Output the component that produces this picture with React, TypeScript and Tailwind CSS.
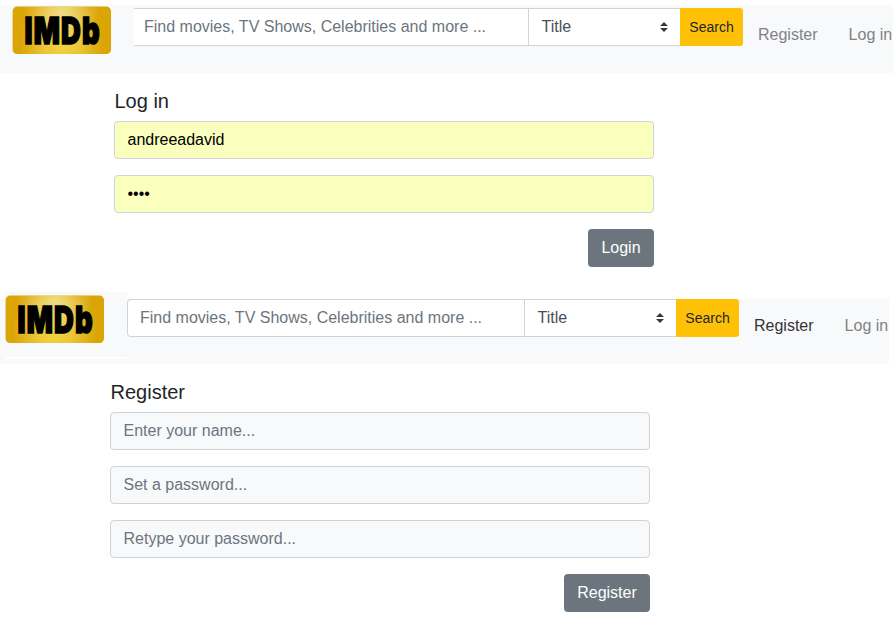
import React from "react";

function Logo({ id }: { id: string }) {
  return (
    <svg width="100" height="50" viewBox="0 0 100 50" className="block shrink-0 overflow-visible" role="img" aria-label="IMDb">
      <defs>
        <radialGradient id={id} gradientUnits="userSpaceOnUse" cx="0" cy="0" r="1" gradientTransform="translate(49.5 36) scale(42 44)">
          <stop offset="0" stopColor="#f2d640" />
          <stop offset="0.4" stopColor="#ebc83a" />
          <stop offset="1" stopColor="#dba506" />
        </radialGradient>
        <radialGradient id={id + "-shine"} gradientUnits="userSpaceOnUse" cx="0" cy="0" r="1" gradientTransform="translate(49.5 7) scale(38 28)">
          <stop offset="0" stopColor="#f1e08c" stopOpacity="0.95" />
          <stop offset="1" stopColor="#f1e08c" stopOpacity="0" />
        </radialGradient>
      </defs>
      <rect x="0.6" y="0.6" width="98.4" height="47.4" rx="4.5" fill={`url(#${id})`} />
      <rect x="0.6" y="0.6" width="98.4" height="47.4" rx="4.5" fill={`url(#${id}-shine)`} />
      <text
        transform="translate(12.6 38.4) scale(0.73 1)"
        x="0"
        y="0"
        textLength="103"
        lengthAdjust="spacing"
        fill="#000"
        stroke="#000"
        strokeWidth="1.6"
        fontFamily="Inter, sans-serif"
        fontWeight="900"
        fontSize="37.5"
      >
        IMDb
      </text>
    </svg>
  );
}

function SearchBar({ first }: { first: string }) {
  return (
    <form className="flex h-[38px] shrink-0" onSubmit={(e) => e.preventDefault()}>
      <input
        aria-label="Search"
        placeholder="Find movies, TV Shows, Celebrities and more ..."
        className={`h-[38px] border-y border-[#ced4da] bg-white pb-px text-base placeholder:text-[#6c757d] ${first}`}
      />
      <div className="flex w-[152px] items-center justify-between border-y border-l border-[#ced4da] bg-white pr-3 pl-[12.5px] text-base text-[#495057]">
        <span className="-mt-px">Title</span>
        <svg width="8" height="10" viewBox="0 0 8 10" fill="#343a40" className="block">
          <path d="M4 0 8 4H0zM4 10 0 6h8z" />
        </svg>
      </div>
      <button className="w-[63px] rounded-r-[3px] bg-[#ffc107] text-sm text-[#212529]">Search</button>
    </form>
  );
}

function Field({ placeholder, value, type = "text" }: { placeholder?: string; value?: string; type?: string }) {
  return (
    <input
      type={type}
      placeholder={placeholder}
      defaultValue={value}
      className={`h-[38px] w-full rounded border border-[#ced4da] px-[12.5px] pb-px text-base text-black placeholder:text-[#6c757d] ${value ? "bg-[#faffbd]" : "bg-[#f8f9fb]"}`}
    />
  );
}

export default function App() {
  return (
    <div className="h-[642px] w-[893px] overflow-hidden bg-white pt-[5px] font-['Liberation_Sans',Arial,sans-serif] leading-6">
      <nav className="flex h-[68px] bg-[#f8f9fb] pl-3">
        <div className="w-[122px] shrink-0 pt-px">
          <Logo id="gold-login" />
        </div>
        <div className="pt-[3px]">
          <SearchBar first="w-[394px] pl-[10px]" />
        </div>
        <div className="flex shrink-0 gap-[31px] pt-[18px] pl-[15px] whitespace-nowrap text-[#818284]">
          <a>Register</a>
          <a>Log in</a>
        </div>
      </nav>

      <form className="ml-[114px] flex h-[219px] w-[540px] flex-col pt-4" onSubmit={(e) => e.preventDefault()}>
        <h5 className="mb-2 pl-[0.5px] text-xl leading-6 text-[#212529]">Log in</h5>
        <div className="flex flex-col gap-4">
          <Field value="andreeadavid" />
          <Field type="password" value="pass" />
          <button className="h-[38px] w-[66px] self-end rounded bg-[#6c757d] pb-px text-base text-white">Login</button>
        </div>
      </form>

      <nav className="flex h-[72px]">
        <div className="flex w-[127px] shrink-0 bg-linear-to-b from-white from-[7px] to-[#f8f9fb] to-[7px]">
          <div className="ml-[5px] h-[67px] w-[122px] border-b-2 border-white bg-[#f8f9fb] pt-[3px]">
            <Logo id="gold-register" />
          </div>
        </div>
        <div className="mt-[7px] flex w-[762px] bg-[#f8f9fb]">
          <SearchBar first="w-[397px] rounded-l border-l pl-3" />
          <div className="flex shrink-0 gap-[31px] pt-[15px] pl-[15px] whitespace-nowrap text-[#818284]">
            <a className="text-[#343537]">Register</a>
            <a>Log in</a>
          </div>
        </div>
      </nav>

      <form className="ml-[110px] flex w-[540px] flex-col pt-4" onSubmit={(e) => e.preventDefault()}>
        <h5 className="mb-2 pl-[0.5px] text-xl leading-6 text-[#212529]">Register</h5>
        <div className="flex flex-col gap-4">
          <Field placeholder="Enter your name..." />
          <Field placeholder="Set a password..." />
          <Field placeholder="Retype your password..." />
          <button className="h-[38px] w-[86px] self-end rounded bg-[#6c757d] pb-px text-base text-white">Register</button>
        </div>
      </form>
    </div>
  );
}
